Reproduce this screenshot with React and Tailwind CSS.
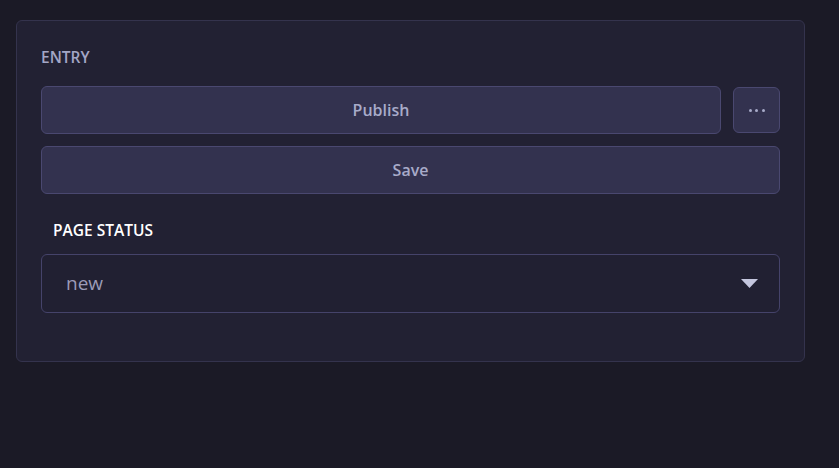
import React from 'react';

const App = () => {
  return (
    <div className="min-h-[468px] w-full bg-[#1b1a26] pt-5 pl-4 pr-[34px]" style={{ fontFamily: '"Open Sans", "Noto Sans", sans-serif' }}>
      <div className="rounded-md border border-[#34334d] bg-[#222133] px-6 pt-6 pb-12">
        {/* Entry */}
        <p className="text-[15.5px] font-semibold text-[#a3a6c6] leading-6">ENTRY</p>
        <div className="mt-[17px] flex gap-3">
          <button className="h-12 flex-1 rounded-md border border-[#4a4870] bg-[#33324f] text-base font-semibold text-[#a8abc9]">
            Publish
          </button>
          <button className="mt-px h-[46px] w-[47px] rounded-md border border-[#4a4870] bg-[#33324f] flex items-center justify-center gap-[3.5px]">
            <span className="h-[3px] w-[3px] rounded-full bg-[#a8abc9]" />
            <span className="h-[3px] w-[3px] rounded-full bg-[#a8abc9]" />
            <span className="h-[3px] w-[3px] rounded-full bg-[#a8abc9]" />
          </button>
        </div>
        <button className="mt-3 h-12 w-full rounded-md border border-[#4a4870] bg-[#33324f] text-base font-semibold text-[#a8abc9]">
          Save
        </button>

        {/* Page status */}
        <p className="mt-6 pl-3 text-[15.5px] font-semibold text-white leading-6">PAGE STATUS</p>
        <div className="mt-3 flex h-[59px] items-center justify-between rounded-md border border-[#45436a] bg-[#212032] pl-6 pr-[21px]">
          <span className="text-[19px] text-[#9b9bb8]">new</span>
          <svg width="17" height="10" viewBox="0 0 17 10">
            <polygon points="0,0 17,0 8.5,9" fill="#c4c6de" />
          </svg>
        </div>
      </div>
    </div>
  );
};

export default App;
